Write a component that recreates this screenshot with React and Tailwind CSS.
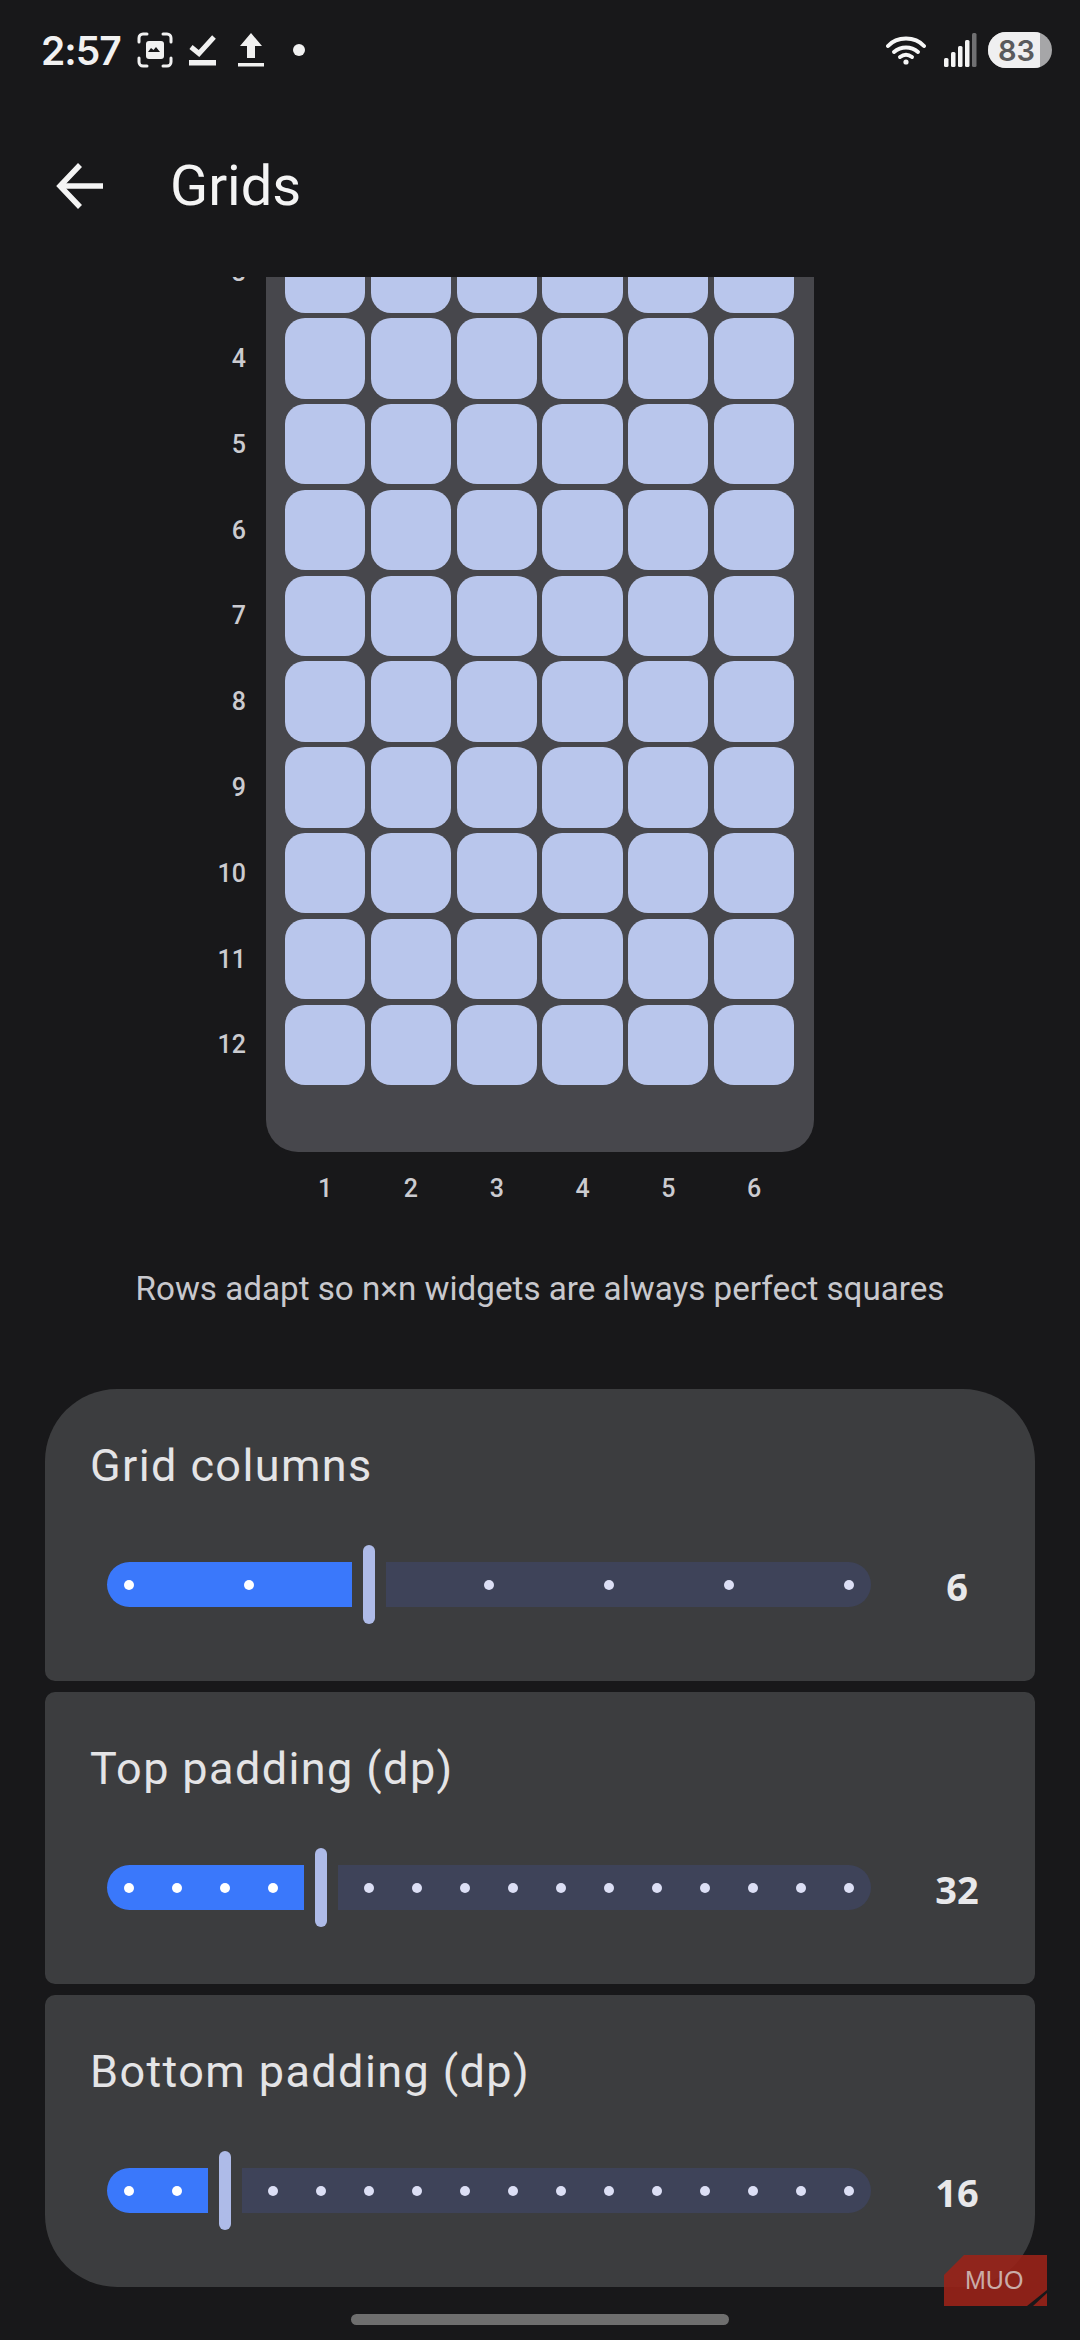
import React from 'react';

const rows = [3, 4, 5, 6, 7, 8, 9, 10, 11, 12];
const cols = [1, 2, 3, 4, 5, 6];

const sliders = [
  { title: 'Grid columns', value: 6, activeWidth: 245, restStart: 386, firstRest: 489, activeDots: 2, restDots: 4, pitch: 120 },
  { title: 'Top padding (dp)', value: 32, activeWidth: 197, restStart: 338, firstRest: 369, activeDots: 4, restDots: 11, pitch: 48 },
  { title: 'Bottom padding (dp)', value: 16, activeWidth: 101, restStart: 242, firstRest: 273, activeDots: 2, restDots: 13, pitch: 48 },
];

const StatusBar = () => (
  <div className="flex items-center h-[100px] pl-[41px] pr-[28px] text-[#f1f1f1]">
    <span className="text-[39px] font-semibold leading-none w-[78px] font-['Inter',sans-serif] tracking-[-1px]">2:57</span>
    <svg width="36" height="36" viewBox="0 0 36 36" className="ml-[18px]" fill="none">
      <path d="M2 10V6a4 4 0 0 1 4-4h4M26 2h4a4 4 0 0 1 4 4v4M34 26v4a4 4 0 0 1-4 4h-4M10 34H6a4 4 0 0 1-4-4v-4" stroke="currentColor" strokeWidth="3" strokeLinecap="round" />
      <rect x="9" y="9" width="18" height="18" rx="3" fill="currentColor" />
      <path d="M11 20l3-4 2.500 2 2.500-3 4 5z" fill="#18181a" />
    </svg>
    <svg width="28" height="32" viewBox="0 0 28 32" className="ml-[16px]" fill="none">
      <path d="M2 13l8 6.500L25 3" stroke="currentColor" strokeWidth="5" />
      <rect x="0" y="26" width="27" height="5.500" fill="currentColor" />
    </svg>
    <svg width="26" height="34" viewBox="0 0 26 34" className="ml-[21px]" fill="none">
      <path d="M13 0l11 13h-7v12H9V13H2z" fill="currentColor" />
      <rect x="0" y="30" width="26" height="3.500" fill="currentColor" />
    </svg>
    <div className="ml-[29px] w-[12px] h-[12px] rounded-full bg-current" />
    <div className="ml-auto flex items-center">
      <svg width="40" height="30" viewBox="0 0 40 30" fill="none" stroke="#f6f6f6" strokeWidth="4" strokeLinecap="round">
        <path d="M2 11C11 1 29 1 38 11" />
        <path d="M8 17c7-6 17-6 24 0" />
        <path d="M14 22c4-3 8-3 12 0" />
        <circle cx="20" cy="27" r="2.600" fill="#f6f6f6" stroke="none" />
      </svg>
      <svg width="33" height="34" viewBox="0 0 33 34" className="ml-[18px]">
        <rect x="0" y="25" width="4.500" height="9" rx="1.500" fill="#f4f4f4" />
        <rect x="7" y="19" width="4.500" height="15" rx="1.500" fill="#f4f4f4" />
        <rect x="14" y="13" width="4.500" height="21" rx="1.500" fill="#f4f4f4" />
        <rect x="21" y="7" width="4.500" height="27" rx="1.500" fill="#f4f4f4" />
        <rect x="28" y="0" width="4.500" height="34" rx="1.500" fill="#707072" />
      </svg>
      <div className="relative ml-[11px] w-[64px] h-[36px] rounded-full overflow-hidden bg-[#a6a6a8]">
        <div className="h-full w-[52px] bg-[#efeff0] flex items-center justify-center pl-[5px]">
          <span className="text-[29px] leading-none font-semibold text-[#5a5a5c] font-['Inter',sans-serif]">83</span>
        </div>
      </div>
    </div>
  </div>
);

const AppBar = () => (
  <div className="flex items-center h-[177px] pb-[6px] pl-[55px]">
    <svg width="49" height="48" viewBox="0 0 49 48" fill="none" stroke="#f4f4f4" strokeWidth="5.500">
      <path d="M48 24H6" />
      <path d="M25 3L5 24l20 21" />
    </svg>
    <h1 className="ml-[66px] text-[56px] leading-none text-[#f4f4f4] font-['Roboto',sans-serif]">Grids</h1>
  </div>
);

const GridPreview = () => (
  <div className="h-[875px] overflow-hidden">
    <div className="-mt-[63px] flex pl-[197px]">
      <div className="w-[49px] pt-[18.500px] flex flex-col gap-[5.500px]">
        {rows.map((r) => (
          <div key={r} className="h-[80.300px] flex items-center justify-end text-[25px] font-medium text-[#cbcbd0] leading-none">
            {r}
          </div>
        ))}
      </div>
      <div className="ml-[20px] w-[548px] h-[938px] rounded-[32px] bg-[#47474c] pl-[19px] pt-[18.500px]">
        <div className="grid grid-cols-[repeat(6,80.300px)] auto-rows-[80.300px] gap-[5.500px]">
          {rows.flatMap((r) => cols.map((c) => <div key={`${r}-${c}`} className="rounded-[20px] bg-[#b9c6ec]" />))}
        </div>
      </div>
    </div>
  </div>
);

const ColumnLabels = () => (
  <div className="mt-[21px] pl-[285px] grid grid-cols-[repeat(6,80.300px)] gap-x-[5.500px]">
    {cols.map((c) => (
      <div key={c} className="h-[30px] flex items-center justify-center text-[25px] font-medium text-[#cbcbd0] leading-none">
        {c}
      </div>
    ))}
  </div>
);

const Slider = ({ s }) => {
  const trackEnd = 871;
  const activePad = 17;
  return (
    <div className="flex items-center h-[79px] pl-[62px]">
      <div
        className="h-[45px] rounded-l-full rounded-r-[5px] bg-[#3a78fb] flex items-center shrink-0"
        style={{ width: s.activeWidth, paddingLeft: activePad, gap: s.pitch - 10 }}
      >
        {Array.from({ length: s.activeDots }).map((_, i) => (
          <div key={i} className="w-[10px] h-[10px] rounded-full bg-white shrink-0" />
        ))}
      </div>
      <div className="ml-[11px] w-[12px] h-[79px] rounded-full bg-[#aebbe8] shrink-0" />
      <div
        className="ml-[11px] h-[45px] rounded-r-full rounded-l-[5px] bg-[#3e4359] flex items-center shrink-0"
        style={{ width: trackEnd - s.restStart, paddingLeft: s.firstRest - s.restStart - 5, gap: s.pitch - 10 }}
      >
        {Array.from({ length: s.restDots }).map((_, i) => (
          <div key={i} className="w-[10px] h-[10px] rounded-full bg-[#dcdff5] shrink-0" />
        ))}
      </div>
      <div className="ml-[36px] w-[100px] text-center text-[38px] font-bold leading-none text-[#e8e8ea] font-['Noto_Sans',sans-serif] pt-[2px]">
        {s.value}
      </div>
    </div>
  );
};

const SliderCard = ({ s, className }) => (
  <div className={`h-[292px] bg-[#3c3d3f] pt-[50px] ${className}`}>
    <div className="pl-[45px] text-[45px] leading-[54px] tracking-[1.400px] text-[#e4e4e6] font-['Roboto',sans-serif]">{s.title}</div>
    <div className="mt-[52px]">
      <Slider s={s} />
    </div>
  </div>
);

const Watermark = () => (
  <div className="absolute left-[944px] top-[2255px] w-[103px] h-[51px]">
    <svg width="103" height="51" viewBox="0 0 103 51" className="absolute inset-0">
      <path d="M20 0H103V35L83 51H0V20z" fill="#9c2218" fillOpacity="0.88" />
      <path d="M89 51L103 38V51z" fill="#9c2218" fillOpacity="0.88" />
    </svg>
    <span className="absolute left-[21px] top-[12px] text-[25px] leading-[26px] font-light text-[#c9aca8] font-['Liberation_Sans',sans-serif]">
      MUO
    </span>
  </div>
);

export default function App() {
  return (
    <div className="relative w-[1080px] h-[2340px] overflow-hidden bg-[#18181a] font-['Roboto',sans-serif]">
      <StatusBar />
      <AppBar />
      <GridPreview />
      <ColumnLabels />
      <p className="mt-[66px] text-center text-[33.200px] leading-[40px] text-[#c8c8cd]">
        Rows adapt so n×n widgets are always perfect squares
      </p>
      <div className="mx-[45px] mt-[80px] flex flex-col gap-[11px]">
        {sliders.map((s, i) => (
          <SliderCard
            key={s.title}
            s={s}
            className={
              i === 0
                ? 'rounded-t-[72px] rounded-b-[10px]'
                : i === 2
                  ? 'rounded-t-[10px] rounded-b-[72px]'
                  : 'rounded-[10px]'
            }
          />
        ))}
      </div>
      <Watermark />
      <div className="absolute left-[351px] top-[2314px] w-[378px] h-[11px] rounded-full bg-[#6e6e6e]" />
    </div>
  );
}
